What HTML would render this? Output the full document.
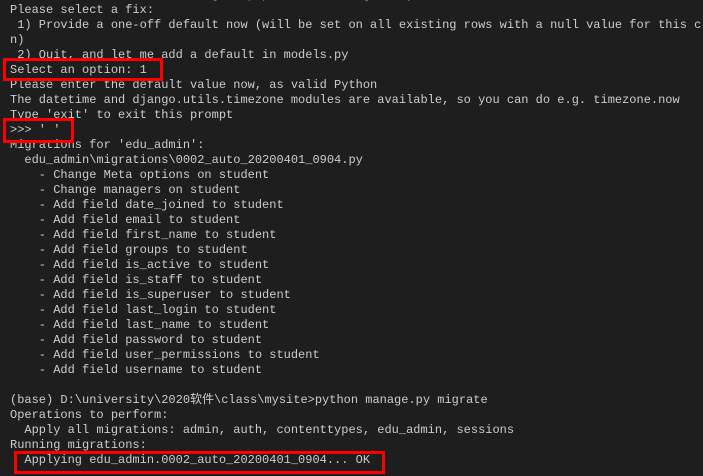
<!DOCTYPE html>
<html><head><meta charset="utf-8">
<style>
html,body{margin:0;padding:0;background:#1e1e1e;width:703px;height:476px;overflow:hidden;}
pre{position:absolute;left:10px;top:-12px;margin:0;font-family:"Liberation Mono","Noto Sans CJK SC",monospace;font-size:12px;line-height:15px;color:#cccccc;white-space:pre;}
.b{position:absolute;border:3px solid #ff0000;box-sizing:border-box;}
</style></head><body>
<pre> the database needs something to populate existing rows).
Please select a fix:
 1) Provide a one-off default now (will be set on all existing rows with a null value for this c
n)
 2) Quit, and let me add a default in models.py
Select an option: 1
Please enter the default value now, as valid Python
The datetime and django.utils.timezone modules are available, so you can do e.g. timezone.now
Type 'exit' to exit this prompt
>>> ' '
Migrations for 'edu_admin':
  edu_admin\migrations\0002_auto_20200401_0904.py
    - Change Meta options on student
    - Change managers on student
    - Add field date_joined to student
    - Add field email to student
    - Add field first_name to student
    - Add field groups to student
    - Add field is_active to student
    - Add field is_staff to student
    - Add field is_superuser to student
    - Add field last_login to student
    - Add field last_name to student
    - Add field password to student
    - Add field user_permissions to student
    - Add field username to student

(base) D:\university\2020软件\class\mysite>python manage.py migrate
Operations to perform:
  Apply all migrations: admin, auth, contenttypes, edu_admin, sessions
Running migrations:
  Applying edu_admin.0002_auto_20200401_0904... OK</pre>
<div class="b" style="left:3px;top:58px;width:160px;height:23px;"></div>
<div class="b" style="left:3px;top:118px;width:71px;height:25px;"></div>
<div class="b" style="left:14px;top:451px;width:371px;height:23px;"></div>
</body></html>
